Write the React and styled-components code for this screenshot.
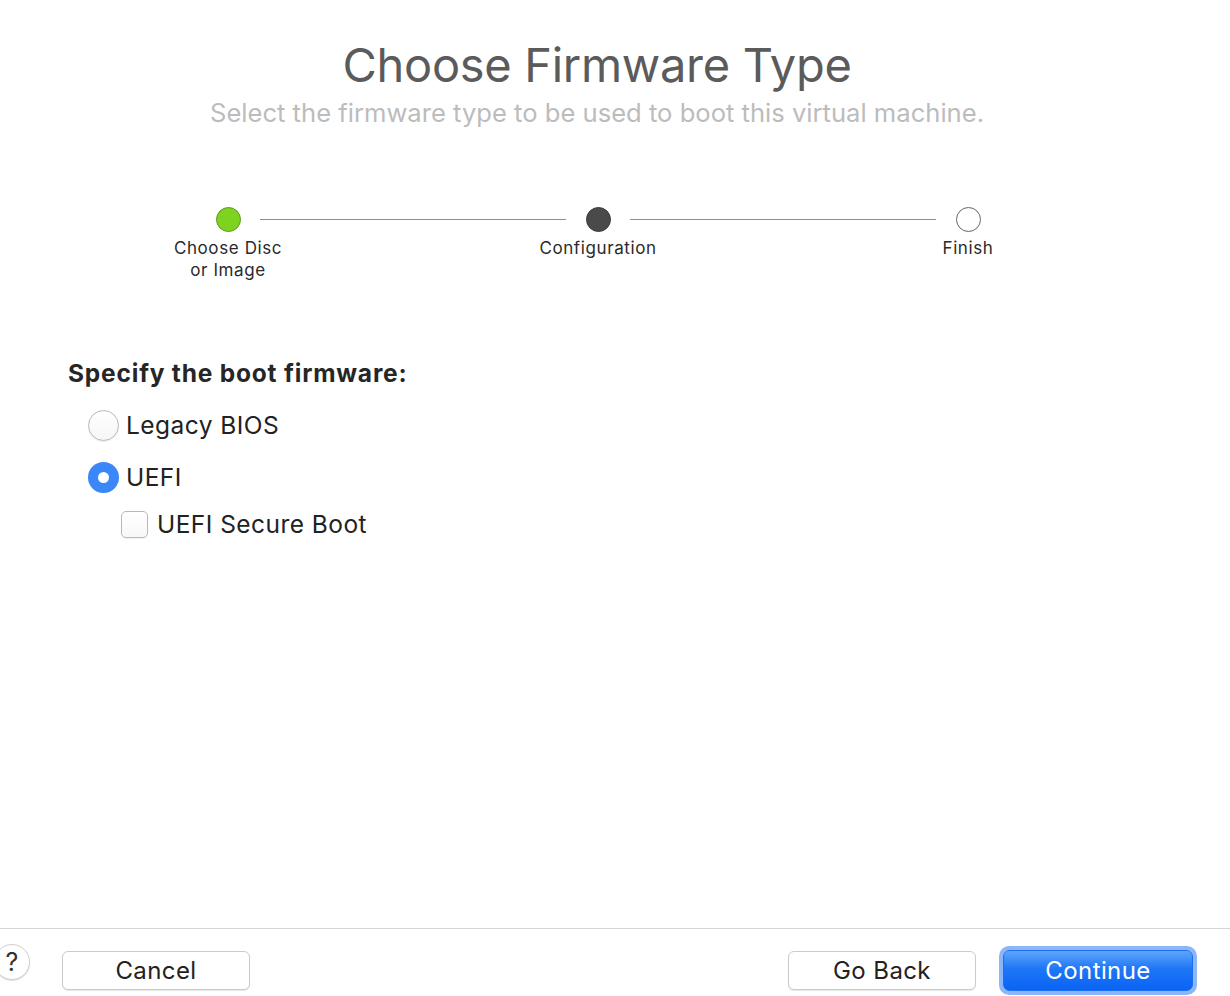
import React from 'react'
import styled, { createGlobalStyle } from 'styled-components'

const GlobalStyle = createGlobalStyle`
    html, body {
        margin: 0;
        padding: 0;
        background: #ffffff;
        font-family: Inter, "Noto Sans", sans-serif;
        overflow: hidden;
    }
`

const Page = styled.div`
    width: 1230px;
    height: 996px;
    display: flex;
    flex-direction: column;
    background: #fff;
`

const Header = styled.header`
    display: flex;
    flex-direction: column;
    align-items: center;
    padding: 35px 36px 0 0;
`

const Title = styled.h1`
    margin: 0;
    font-size: 47px;
    font-weight: 400;
    color: #5b5b5b;
    line-height: 60px;
    letter-spacing: -0.3px;
`

const Subtitle = styled.p`
    margin: 2px 0 0;
    font-size: 25.6px;
    color: #bcbcbc;
    line-height: 32px;
`

const Stepper = styled.div`
    display: flex;
    align-items: flex-start;
    margin: 78px 0 0 196px;
    width: 804px;
`

const Step = styled.div`
    width: 64px;
    display: flex;
    flex-direction: column;
    align-items: center;
    flex: none;
`

const Dot = styled.div`
    width: 25px;
    height: 25px;
    border-radius: 50%;
    box-sizing: border-box;
    border: 1px solid ${p => p.$state === 'done' ? '#5c9a1f' : p.$state === 'current' ? '#3c3c3c' : '#666'};
    background: ${p => p.$state === 'done' ? '#7ed321' : p.$state === 'current' ? '#4a4a4a' : '#fff'};
`

const StepLabel = styled.div`
    margin-top: 5px;
    font-size: 17px;
    letter-spacing: 0.6px;
    line-height: 22px;
    color: #2a2a2a;
    text-align: center;
    white-space: nowrap;
`

const Connector = styled.div`
    flex: 1;
    height: 1px;
    background: #8e8e8e;
    margin-top: 12px;
`

const Content = styled.section`
    flex: 1;
    padding: 77px 0 0 68px;
`

const Heading = styled.h2`
    margin: 0 0 20px;
    font-size: 24.5px;
    font-weight: 700;
    letter-spacing: 0.8px;
    color: #262626;
    line-height: 30px;
`

const Option = styled.label`
    display: flex;
    align-items: center;
    gap: 7px;
    height: 34px;
    margin: ${p => p.$tight ? -5 : 0}px 0 18px ${p => p.$indent || 20}px;
    font-size: 24.5px;
    letter-spacing: 0.45px;
    color: #222;
`

const Radio = styled.span`
    width: 31px;
    height: 31px;
    border-radius: 50%;
    box-sizing: border-box;
    display: flex;
    align-items: center;
    justify-content: center;
    border: ${p => p.$checked ? 'none' : '1px solid #b9b9b9'};
    background: ${p => p.$checked ? '#3b87f7' : 'linear-gradient(#fff, #f6f6f6)'};
    box-shadow: ${p => p.$checked ? 'none' : '0 1px 1px rgba(0,0,0,0.08)'};

    &::after {
        content: '';
        display: ${p => p.$checked ? 'block' : 'none'};
        width: 11px;
        height: 11px;
        border-radius: 50%;
        background: #fff;
    }
`

const Checkbox = styled.span`
    width: 27px;
    height: 27px;
    border-radius: 5px;
    box-sizing: border-box;
    border: 1px solid #b9b9b9;
    background: linear-gradient(#fff, #f8f8f8);
    box-shadow: 0 1px 1px rgba(0,0,0,0.06);
    margin-right: 2px;
`

const Footer = styled.footer`
    border-top: 1px solid #d6d6d6;
    height: 68px;
    display: flex;
    align-items: flex-start;
    padding: 0 37px 0 0;
    box-sizing: border-box;
`

const HelpButton = styled.div`
    width: 36px;
    height: 36px;
    border-radius: 50%;
    box-sizing: border-box;
    border: 1px solid #cfcfcf;
    box-shadow: 0 1px 1px rgba(0,0,0,0.12);
    margin: 15px 0 0 -6px;
    display: flex;
    align-items: center;
    justify-content: center;
    font-size: 25px;
    color: #333;
    background: #fff;
`

const Button = styled.div`
    width: 188px;
    height: 39px;
    box-sizing: border-box;
    border-radius: 6px;
    display: flex;
    align-items: center;
    justify-content: center;
    font-size: 24px;
    letter-spacing: 0.4px;
    color: #222;
    background: #fff;
    border: 1px solid #cbcbcb;
    box-shadow: 0 1px 1px rgba(0,0,0,0.1);
    margin-top: 22px;
`

const PrimaryButton = styled(Button)`
    width: 190px;
    height: 41px;
    margin-top: 21px;
    color: #fff;
    border: 1px solid #1a6ff0;
    background: linear-gradient(#5ea5fb, #1f77f7 45%, #0a63f4);
    box-shadow: 0 0 0 4px #8bb6f7;
`

const Spacer = styled.div`
    flex: 1;
`

export default function App() {
    return <Page>
        <GlobalStyle />
        <Header>
            <Title>Choose Firmware Type</Title>
            <Subtitle>Select the firmware type to be used to boot this virtual machine.</Subtitle>
        </Header>

        <Stepper>
            <Step>
                <Dot $state="done" />
                <StepLabel>Choose Disc<br />or Image</StepLabel>
            </Step>
            <Connector />
            <Step>
                <Dot $state="current" />
                <StepLabel>Configuration</StepLabel>
            </Step>
            <Connector />
            <Step>
                <Dot />
                <StepLabel>Finish</StepLabel>
            </Step>
        </Stepper>

        <Content>
            <Heading>Specify the boot firmware:</Heading>
            <Option>
                <Radio />
                Legacy BIOS
            </Option>
            <Option>
                <Radio $checked />
                UEFI
            </Option>
            <Option $indent={53} $tight>
                <Checkbox />
                UEFI Secure Boot
            </Option>
        </Content>

        <Footer>
            <HelpButton>?</HelpButton>
            <Button style={{ marginLeft: 32 }}>Cancel</Button>
            <Spacer />
            <Button>Go Back</Button>
            <PrimaryButton style={{ marginLeft: 27 }}>Continue</PrimaryButton>
        </Footer>
    </Page>
}
